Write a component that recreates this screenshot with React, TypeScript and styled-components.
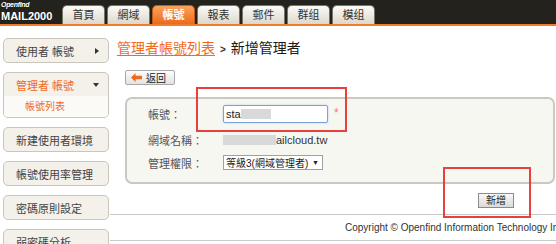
import React from "react";
import styled, { createGlobalStyle } from "styled-components";

const Global = createGlobalStyle`
  html, body { margin: 0; padding: 0; background: #fff; }
  body {
    font-family: "Liberation Sans", "Noto Sans CJK TC", sans-serif;
    width: 556px; height: 244px; overflow: hidden;
  }
  * { box-sizing: border-box; }
`;

const Page = styled.div`
  position: relative;
  width: 556px;
  height: 244px;
  overflow: hidden;
`;

const Header = styled.div`
  height: 26px;
  background: #23221c;
  border-bottom: 2px solid #f07b2b;
  display: flex;
  align-items: flex-end;
`;

const Logo = styled.div`
  width: 62px;
  height: 24px;
  display: flex;
  flex-direction: column;
  padding-left: 1px;
  color: #fff;
  align-self: flex-start;
`;

const LogoSmall = styled.span`
  font-size: 7px;
  font-weight: bold;
  font-style: italic;
  line-height: 8px;
  margin-top: 1px;
  letter-spacing: -0.3px;
`;

const LogoBig = styled.span`
  font-size: 11px;
  font-weight: bold;
  line-height: 12px;
  margin-top: 1px;
`;

const Tabs = styled.div`
  display: flex;
  gap: 2px;
  align-items: flex-end;
`;

const Tab = styled.div<{ $active?: boolean }>`
  width: 43px;
  height: 19px;
  border: 1px solid ${(p) => (p.$active ? "#c85a12" : "#77746a")};
  border-bottom: none;
  border-radius: 5px 5px 0 0;
  background: ${(p) =>
    p.$active
      ? "linear-gradient(#f9a45c, #ec6a1c)"
      : "linear-gradient(#fbfaf5, #dcd8cd)"};
  color: ${(p) => (p.$active ? "#fff" : "#333")};
  font-weight: ${(p) => (p.$active ? "bold" : "normal")};
  font-size: 11px;
  line-height: 19px;
  text-align: center;
`;

const Body = styled.div`
  display: flex;
`;

const Sidebar = styled.div`
  width: 110px;
  flex: none;
  padding: 12px 0 0 3px;
  display: flex;
  flex-direction: column;
  gap: 9px;
`;

const SideItem = styled.div`
  width: 106px;
  border: 1px solid #c9c6bc;
  border-radius: 5px;
  background: #f3f1ea;
  overflow: hidden;
`;

const SideHead = styled.div<{ $active?: boolean }>`
  height: 23px;
  display: flex;
  align-items: center;
  justify-content: space-between;
  padding: 0 9px 0 12px;
  font-size: 11px;
  color: ${(p) => (p.$active ? "#f06a1f" : "#444")};
`;

const SubItem = styled.div`
  height: 21px;
  line-height: 21px;
  padding-left: 21px;
  font-size: 10px;
  color: #f06a1f;
  background: #fbfaf7;
`;

const ArrowRight = styled.span`
  width: 0;
  height: 0;
  border-left: 4px solid #333;
  border-top: 3px solid transparent;
  border-bottom: 3px solid transparent;
`;

const ArrowDown = styled.span`
  width: 0;
  height: 0;
  border-top: 4px solid #333;
  border-left: 3px solid transparent;
  border-right: 3px solid transparent;
`;

const Main = styled.div`
  flex: 1;
  min-width: 0;
  overflow: hidden;
  padding-top: 12px;
  display: flex;
  flex-direction: column;
`;

const Title = styled.div`
  padding-left: 7px;
  height: 20px;
  line-height: 20px;
  font-size: 14px;
  color: #1a1a1a;
  white-space: nowrap;
`;

const TitleLink = styled.span`
  color: #f26b1d;
  text-decoration: underline;
  text-underline-offset: 2px;
`;

const Sep = styled.span`
  font-size: 10px;
  font-weight: bold;
  margin: 0 5px 0 5px;
  color: #333;
`;

const BackButton = styled.div`
  margin: 12px 0 0 15px;
  width: 50px;
  height: 15px;
  border: 1px solid #a9a9a9;
  border-radius: 2px;
  background: linear-gradient(#fdfdfd, #e2e2e2);
  display: flex;
  align-items: center;
  gap: 4px;
  padding-left: 5px;
  font-size: 10px;
  color: #222;
`;

const Panel = styled.div`
  margin: 12px 1px 0 15px;
  height: 87px;
  border: 2px solid #cac8c0;
  border-radius: 7px;
  background: #f7f7f2;
  padding: 6px 0 0 21px;
  display: flex;
  flex-direction: column;
`;

const Row = styled.div<{ $h: number; $mt?: number }>`
  display: flex;
  align-items: center;
  height: ${(p) => p.$h}px;
  margin-top: ${(p) => p.$mt ?? 0}px;
`;

const Label = styled.div`
  width: 75px;
  font-size: 11px;
  color: #555;
`;

const FakeInput = styled.div`
  width: 105px;
  height: 18px;
  border: 1px solid #7aa3d6;
  border-radius: 2px;
  box-shadow: 0 0 2px #a9c7ef;
  background: #fff;
  display: flex;
  align-items: center;
  padding-left: 2px;
  font-size: 11px;
  color: #222;
`;

const Blur = styled.span<{ $w: number }>`
  display: inline-block;
  width: ${(p) => p.$w}px;
  height: 10px;
  background: #d9d9d9;
`;

const Required = styled.span`
  margin-left: 6px;
  color: #f27a7a;
  font-size: 12px;
  line-height: 12px;
  align-self: flex-start;
  margin-top: 2px;
`;

const Value = styled.span`
  font-size: 11px;
  color: #333;
`;

const FakeSelect = styled.div`
  width: 100px;
  height: 15px;
  border: 1px solid #a0a0a0;
  background: #fff;
  display: flex;
  align-items: center;
  justify-content: space-between;
  padding: 0 3px 0 2px;
  font-size: 10px;
  color: #222;
`;

const SelectArrow = styled.span`
  font-size: 7px;
  color: #222;
`;

const SubmitRow = styled.div`
  display: flex;
  justify-content: flex-end;
  padding-right: 42px;
  margin-top: 9px;
`;

const SubmitButton = styled.div`
  width: 36px;
  height: 15px;
  border: 1px solid #8b8b8b;
  background: linear-gradient(#f8f8f8, #dadada);
  font-size: 10px;
  line-height: 13px;
  text-align: center;
  color: #222;
`;

const Divider = styled.div<{ $mt?: number }>`
  margin-top: ${(p) => p.$mt ?? 0}px;
  border-top: 1px solid #c9c9c9;
`;

const Footer = styled.div`
  height: 25px;
  line-height: 25px;
  padding-left: 235px;
  font-size: 10px;
  color: #333;
  white-space: nowrap;
  overflow: hidden;
`;

const RedBox = styled.div<{ $x: number; $y: number; $w: number; $h: number }>`
  position: absolute;
  left: ${(p) => p.$x}px;
  top: ${(p) => p.$y}px;
  width: ${(p) => p.$w}px;
  height: ${(p) => p.$h}px;
  border: 2px solid #e8403c;
  pointer-events: none;
`;

const tabs = ["首頁", "網域", "帳號", "報表", "郵件", "群组", "模组"];

const BackArrow = () => (
  <svg width="11" height="9" viewBox="0 0 11 9">
    <path d="M0 4.5 L4.5 0 L4.5 2.8 L11 2.8 L11 6.2 L4.5 6.2 L4.5 9 Z" fill="#ee6a1d" />
  </svg>
);

export default function App() {
  return (
    <Page>
      <Global />
      <Header>
        <Logo>
          <LogoSmall>Openfind</LogoSmall>
          <LogoBig>MAIL2000</LogoBig>
        </Logo>
        <Tabs>
          {tabs.map((t) => (
            <Tab key={t} $active={t === "帳號"}>
              {t}
            </Tab>
          ))}
        </Tabs>
      </Header>
      <Body>
        <Sidebar>
          <SideItem>
            <SideHead>
              使用者 帳號
              <ArrowRight />
            </SideHead>
          </SideItem>
          <SideItem>
            <SideHead $active>
              管理者 帳號
              <ArrowDown />
            </SideHead>
            <SubItem>帳號列表</SubItem>
          </SideItem>
          <SideItem>
            <SideHead>新建使用者環境</SideHead>
          </SideItem>
          <SideItem>
            <SideHead>帳號使用率管理</SideHead>
          </SideItem>
          <SideItem>
            <SideHead>密碼原則設定</SideHead>
          </SideItem>
          <SideItem>
            <SideHead>弱密碼分析</SideHead>
          </SideItem>
        </Sidebar>
        <Main>
          <Title>
            <TitleLink>管理者帳號列表</TitleLink>
            <Sep>&gt;</Sep>新增管理者
          </Title>
          <BackButton>
            <BackArrow />
            返回
          </BackButton>
          <Panel>
            <Row $h={18}>
              <Label>帳號：</Label>
              <FakeInput>
                sta
                <Blur $w={30} />
              </FakeInput>
              <Required>*</Required>
            </Row>
            <Row $h={16} $mt={9}>
              <Label>網域名稱：</Label>
              <Blur $w={53} />
              <Value>ailcloud.tw</Value>
            </Row>
            <Row $h={15} $mt={7}>
              <Label>管理權限：</Label>
              <FakeSelect>
                等級3(網域管理者)
                <SelectArrow>▼</SelectArrow>
              </FakeSelect>
            </Row>
          </Panel>
          <SubmitRow>
            <SubmitButton>新增</SubmitButton>
          </SubmitRow>
          <Divider $mt={6} />
          <Footer>Copyright © Openfind Information Technology Inc. All rights reserved.</Footer>
          <Divider />
        </Main>
      </Body>
      <RedBox $x={196} $y={87} $w={151} $h={45} />
      <RedBox $x={443} $y={167} $w={88} $h={51} />
    </Page>
  );
}
